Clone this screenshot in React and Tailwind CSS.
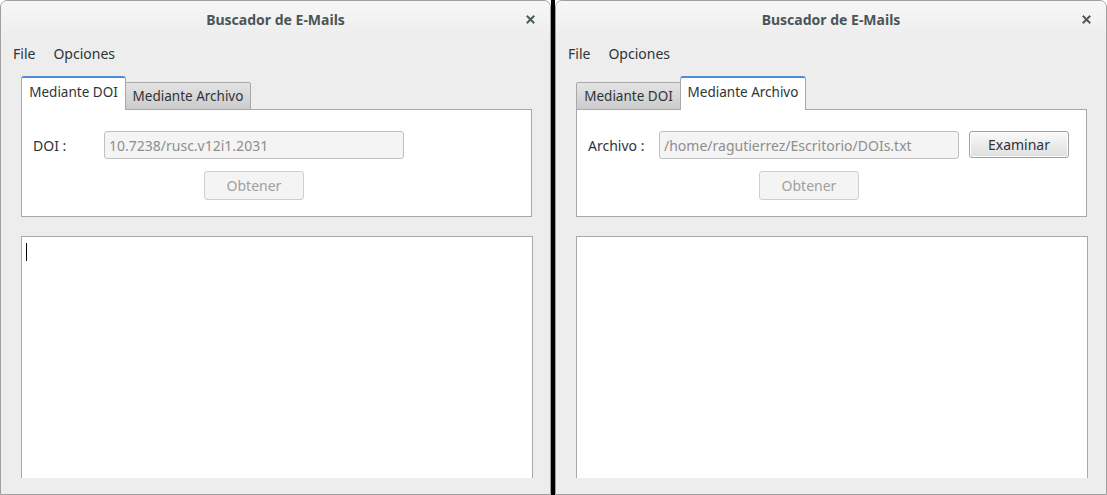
import React from "react";

const font = { fontFamily: '"Noto Sans", "DejaVu Sans", sans-serif' };

function CloseIcon() {
  return (
    <svg width="9" height="9" viewBox="0 0 9 9">
      <path d="M1.5 1.5 L7.5 7.5 M7.5 1.5 L1.5 7.5" stroke="#4f5a5d" strokeWidth="2" strokeLinecap="square" />
    </svg>
  );
}

function Tab({ label, active, width }) {
  if (active) {
    return (
      <div
        className="h-[34px] flex items-center justify-center bg-white border-x border-t-2 border-x-[#a8a8a8] border-t-[#4a90d9] rounded-t-[3px] text-[13.5px] text-[#2e3436] -mb-px relative z-10"
        style={{ width }}
      >
        <span className="-mt-[3px]">{label}</span>
      </div>
    );
  }
  return (
    <div
      className="h-[28px] flex items-center justify-center bg-gradient-to-b from-[#e4e4e4] to-[#cbcbcb] border border-[#a8a8a8] rounded-t-[2px] text-[13.5px] text-[#2e3436] -mb-px"
      style={{ width }}
    >
      {label}
    </div>
  );
}

function Window({ activeTab, width }) {
  const archivo = activeTab === 1;
  return (
    <div
      className="h-[495px] flex flex-col bg-[#ededed] border border-[#a0a0a0] rounded-t-[7px] overflow-hidden"
      style={{ width, ...font }}
    >
      <div className="h-[37px] shrink-0 flex items-center relative bg-gradient-to-b from-[#f7f7f7] to-[#ededed]">
        <div className="flex-1 text-center font-bold text-[14px] text-[#4a5558]">Buscador de E-Mails</div>
        <div className="absolute right-[15px] top-[14px] flex">
          <CloseIcon />
        </div>
      </div>
      <div className="h-[30px] shrink-0 flex items-center pl-[12px] text-[14px] text-[#2e3436] gap-[18px]">
        <span>File</span>
        <span>Opciones</span>
      </div>
      <div className="pl-[20px] pt-[8px] flex flex-col flex-1">
        <div className="flex items-end">
          <Tab label="Mediante DOI" active={!archivo} width={105} />
          <div className="-ml-px">
            <Tab label="Mediante Archivo" active={archivo} width={126} />
          </div>
        </div>
        <div className="w-[511px] h-[108px] bg-white border border-[#a8a8a8] flex flex-col">
          <div className="flex items-center pt-[21px] pl-[11px]">
            <div className="w-[71px] text-[14px] text-[#2e3436]">{archivo ? "Archivo :" : "DOI :"}</div>
            <div className="w-[300px] h-[28px] bg-[#f4f4f4] border border-[#c0c0c0] rounded-[3px] flex items-center pl-[4px] text-[14px] text-[#8e8e8e] overflow-hidden whitespace-nowrap">
              {archivo ? "/home/ragutierrez/Escritorio/DOIs.txt" : "10.7238/rusc.v12i1.2031"}
            </div>
            {archivo && (
              <div className="ml-[10px] w-[100px] h-[27px] -mt-[1px] rounded-[3px] border border-[#a0a0a0] bg-gradient-to-b from-[#fafafa] to-[#dedede] shadow-[inset_0_0_0_1px_#ffffff] flex items-center justify-center text-[14px] text-[#2e3436]">
                Examinar
              </div>
            )}
          </div>
          <div className="flex pl-[182px] pt-[12px]">
            <div className="w-[100px] h-[29px] rounded-[3px] border border-[#cfcfcf] bg-[#f4f4f4] flex items-center justify-center text-[14px] text-[#a0a0a0]">
              Obtener
            </div>
          </div>
        </div>
        <div className="mt-[19px] w-[512px] h-[242px] bg-white border-x border-t border-[#a8a8a8] relative">
          {!archivo && <div className="absolute left-[4px] top-[6px] w-px h-[18px] bg-black" />}
        </div>
      </div>
    </div>
  );
}

export default function App() {
  return (
    <div className="w-[1107px] h-[495px] flex bg-white overflow-hidden">
      <Window activeTab={0} width={551} />
      <div className="w-[4px] h-[495px] bg-black shrink-0" />
      <Window activeTab={1} width={552} />
    </div>
  );
}
